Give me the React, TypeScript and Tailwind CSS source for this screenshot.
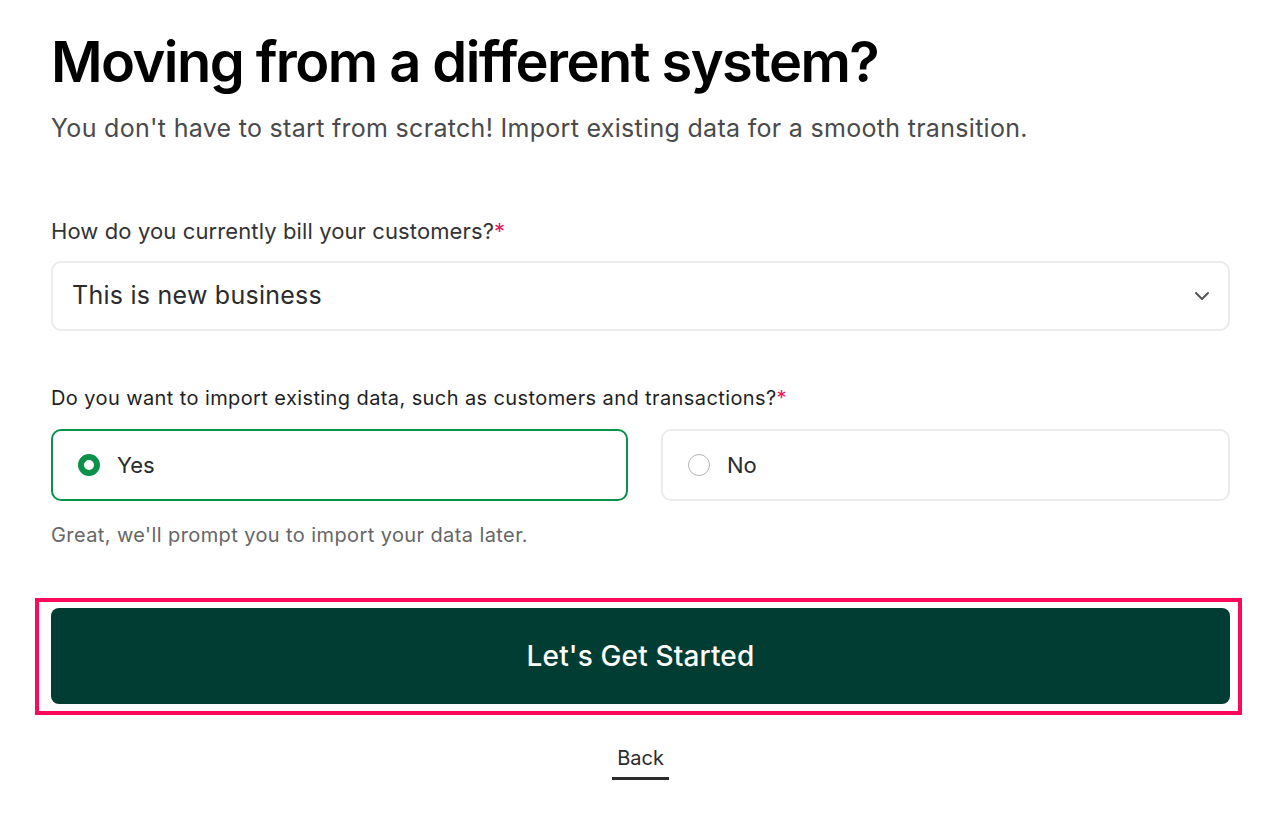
import { useState } from 'react';
import { ChevronDown } from 'lucide-react';

export default function App() {
  const [importData, setImportData] = useState<'yes' | 'no'>('yes');

  return (
    <div className="min-h-screen bg-white font-['Inter',sans-serif] text-[#2b2b2b]">
      <div className="pl-[51px] pr-[48px] pt-[28px]">
        {/* Header */}
        <h1 className="text-[56px] leading-[68px] font-semibold tracking-[-0.028em] text-black">
          Moving from a different system?
        </h1>
        <p className="mt-[16px] text-[25px] leading-[32px] tracking-[0.012em] text-[#4a4a4a]">
          You don't have to start from scratch! Import existing data for a smooth transition.
        </p>

        {/* Billing question */}
        <div className="mt-[73px]">
          <label className="block text-[22px] leading-[28px] tracking-[0.005em] text-[#333]">
            How do you currently bill your customers?<span className="text-[#e8175d]">*</span>
          </label>
          <div className="relative mt-[16px]">
            <select
              defaultValue="new"
              className="w-full h-[70px] appearance-none rounded-[10px] border-2 border-[#ebebeb] bg-white pl-[19px] pr-12 text-[25px] tracking-[0.01em] text-[#2b2b2b] outline-none"
            >
              <option value="new">This is new business</option>
              <option value="other">Another billing system</option>
            </select>
            <ChevronDown
              className="pointer-events-none absolute right-[16px] top-1/2 -translate-y-1/2 w-6 h-6 text-[#555]"
              strokeWidth={2}
            />
          </div>
        </div>

        {/* Import question */}
        <div className="mt-[53px]">
          <label className="block text-[20px] leading-[28px] tracking-[0.02em] text-[#1f1f1f]">
            Do you want to import existing data, such as customers and transactions?<span className="text-[#e8175d]">*</span>
          </label>
          <div className="mt-[17px] grid grid-cols-[577px_1fr] gap-[33px]">
            {(['yes', 'no'] as const).map((v) => {
              const active = importData === v;
              return (
                <button
                  key={v}
                  onClick={() => setImportData(v)}
                  className={
                    active
                      ? 'flex h-[72px] items-center gap-[17px] rounded-[10px] border-2 border-[#0b9149] bg-white pl-[25px] text-left'
                      : 'flex h-[72px] items-center gap-[17px] rounded-[10px] border-2 border-[#ebebeb] bg-white pl-[25px] text-left'
                  }
                >
                  {active ? (
                    <span className="h-[22px] w-[22px] rounded-full border-[6px] border-[#0b9149] bg-white" />
                  ) : (
                    <span className="h-[22px] w-[22px] rounded-full border border-[#b5b5b5] bg-white" />
                  )}
                  <span className="text-[22px] text-[#2b2b2b]">{v === 'yes' ? 'Yes' : 'No'}</span>
                </button>
              );
            })}
          </div>
          <p className="mt-[20px] text-[20px] leading-[28px] tracking-[0.02em] text-[#666]">
            Great, we'll prompt you to import your data later.
          </p>
        </div>

        {/* Submit */}
        <div className="relative mt-[59px]">
          <button className="flex h-[96px] w-full items-center justify-center rounded-[8px] bg-[#023d33] text-[28px] font-medium tracking-[0.005em] text-white">
            Let's Get Started
          </button>
          <div className="pointer-events-none absolute -left-[16px] -right-[12px] -top-[10px] -bottom-[11px] border-4 border-[#ff0a5a]" />
        </div>

        <div className="mt-[41px] flex justify-center">
          <button className="border-b-[3px] border-[#2b2b2b] px-[5px] pb-[6px] text-[20px] leading-[26px] text-[#2b2b2b]">
            Back
          </button>
        </div>
      </div>
    </div>
  );
}
